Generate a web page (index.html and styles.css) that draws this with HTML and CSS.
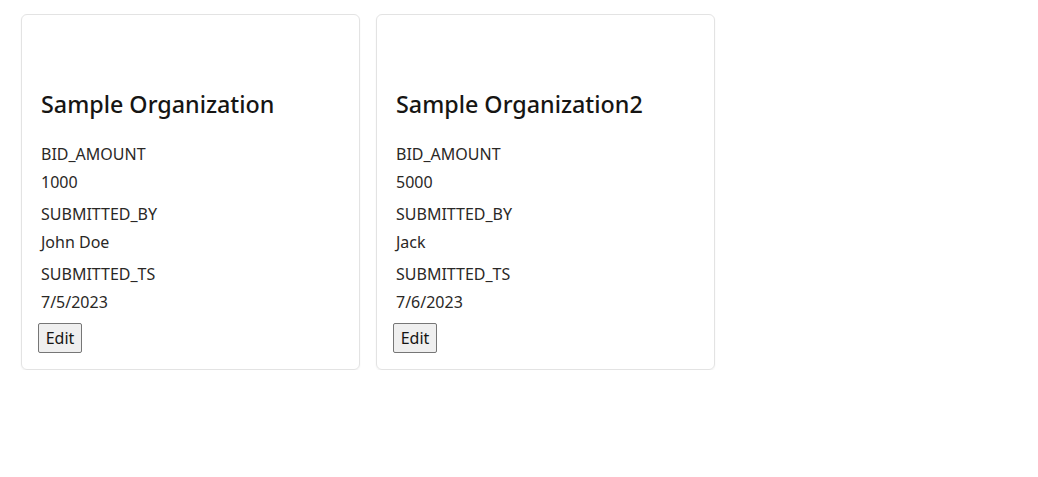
FILE: index.html
```html
<!DOCTYPE html>
<html>
<head>
<meta charset="utf-8">
<link rel="stylesheet" href="styles.css">
</head>
<body>
<div class="grid">
  <div class="card">
    <div class="media"></div>
    <h2 class="title">Sample Organization</h2>
    <div class="fields">
      <div class="field"><div class="label">BID_AMOUNT</div><div class="value">1000</div></div>
      <div class="field"><div class="label">SUBMITTED_BY</div><div class="value">John Doe</div></div>
      <div class="field"><div class="label">SUBMITTED_TS</div><div class="value">7/5/2023</div></div>
    </div>
    <button class="btn">Edit</button>
  </div>
  <div class="card">
    <div class="media"></div>
    <h2 class="title">Sample Organization2</h2>
    <div class="fields">
      <div class="field"><div class="label">BID_AMOUNT</div><div class="value">5000</div></div>
      <div class="field"><div class="label">SUBMITTED_BY</div><div class="value">Jack</div></div>
      <div class="field"><div class="label">SUBMITTED_TS</div><div class="value">7/6/2023</div></div>
    </div>
    <button class="btn">Edit</button>
  </div>
</div>
</body>
</html>
```
FILE: styles.css
```css
html, body {
  margin: 0;
  background: #fff;
}
body {
  font-family: "Noto Sans", "Open Sans", sans-serif;
  color: #161513;
}
.grid {
  display: flex;
  gap: 16px;
  padding: 14px 0 0 21px;
  align-items: flex-start;
}
.card {
  box-sizing: border-box;
  width: 339px;
  height: 356px;
  border: 1px solid #e3e3e3;
  border-radius: 6px;
  box-shadow: 0 1px 2px rgba(0,0,0,0.06);
  padding: 0 16px 0 16px;
  display: flex;
  flex-direction: column;
  align-items: flex-start;
}
.media {
  height: 69px;
}
.title {
  margin: 0 0 0 3px;
  font-size: 23.3px;
  font-weight: 500;
  line-height: 40px;
  color: #161513;
}
.fields {
  margin-top: 16px;
  padding-left: 3px;
  display: flex;
  flex-direction: column;
  gap: 4px;
}
.label, .value {
  font-size: 16px;
  line-height: 28px;
  color: #2a2826;
}
.btn {
  margin-top: 7px;
  font-family: inherit;
  font-size: 16px;
  height: 30px;
  width: 44px;
  padding: 0;
  background: #efefef;
  border: 1px solid #767676;
  border-radius: 2px;
  color: #161513;
}
```
